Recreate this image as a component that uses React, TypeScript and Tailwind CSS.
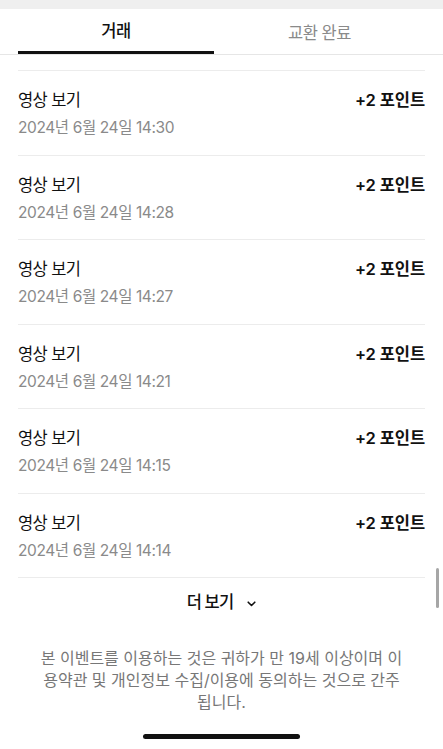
import React from 'react';

const items = ['14:30', '14:28', '14:27', '14:21', '14:15', '14:14'];

const HistoryRow: React.FC<{ time: string }> = ({ time }) => (
  <div className="border-t border-[#ececec] pt-[17px] pb-[16.5px]">
    <div className="flex items-center justify-between">
      <span className="text-[16.5px] leading-[24px] text-[#111] tracking-[-0.6px]">영상 보기</span>
      <span className="text-[16.5px] leading-[24px] font-semibold text-[#111] tracking-[-0.1px]">+2 포인트</span>
    </div>
    <div className="mt-[6px] text-[15.5px] leading-[20px] text-[#8a8a8a] tracking-[-0.4px]">2024년 6월 24일 {time}</div>
  </div>
);

export default function App() {
  return (
    <div className="relative min-h-[749px] w-[443px] overflow-hidden bg-white font-[Inter,'Noto_Sans_CJK_KR',sans-serif]">
      <div className="h-[9px] bg-[#efefef]" />

      <div className="flex border-b border-[#e6e6e6] px-[18px]">
        <button className="flex h-[45px] w-[196px] items-center justify-center border-b-[3px] border-[#111] pt-[3px] text-[16.5px] font-medium text-[#111] tracking-[-0.5px]">
          거래
        </button>
        <button className="flex h-[45px] flex-1 items-center justify-center pt-[3px] text-[16.5px] text-[#8a8a8a] tracking-[-0.5px]">
          교환 완료
        </button>
      </div>

      <div className="mt-[15px] px-[18px]">
        {items.map(t => (
          <HistoryRow key={t} time={t} />
        ))}
        <div className="border-t border-[#ececec] pt-[13px]">
          <button className="flex w-full items-center justify-center gap-[14px] text-[16.5px] leading-[22px] font-medium text-[#111] tracking-[-0.8px]">
            더 보기
            <svg width="9" height="6" viewBox="0 0 9 6" fill="none" className="mt-[3px]">
              <path d="M1.2 1.2L4.5 4.5L7.8 1.2" stroke="#111" strokeWidth="1.6" strokeLinecap="round" strokeLinejoin="round" />
            </svg>
          </button>
        </div>
      </div>

      <p className="mt-[34px] px-[20px] text-center text-[16px] leading-[22px] text-[#777]">
        <span className="block">본 이벤트를 이용하는 것은 귀하가 만 19세 이상이며 이</span>
        <span className="block">용약관 및 개인정보 수집/이용에 동의하는 것으로 간주</span>
        <span className="block">됩니다.</span>
      </p>

      <div className="mt-[21px] flex justify-center">
        <div className="h-[5px] w-[157px] rounded-full bg-[#111]" />
      </div>

      <div className="absolute left-[436px] top-[568px] h-[40px] w-[3px] rounded-full bg-[#a6a6a6]" />
    </div>
  );
}
